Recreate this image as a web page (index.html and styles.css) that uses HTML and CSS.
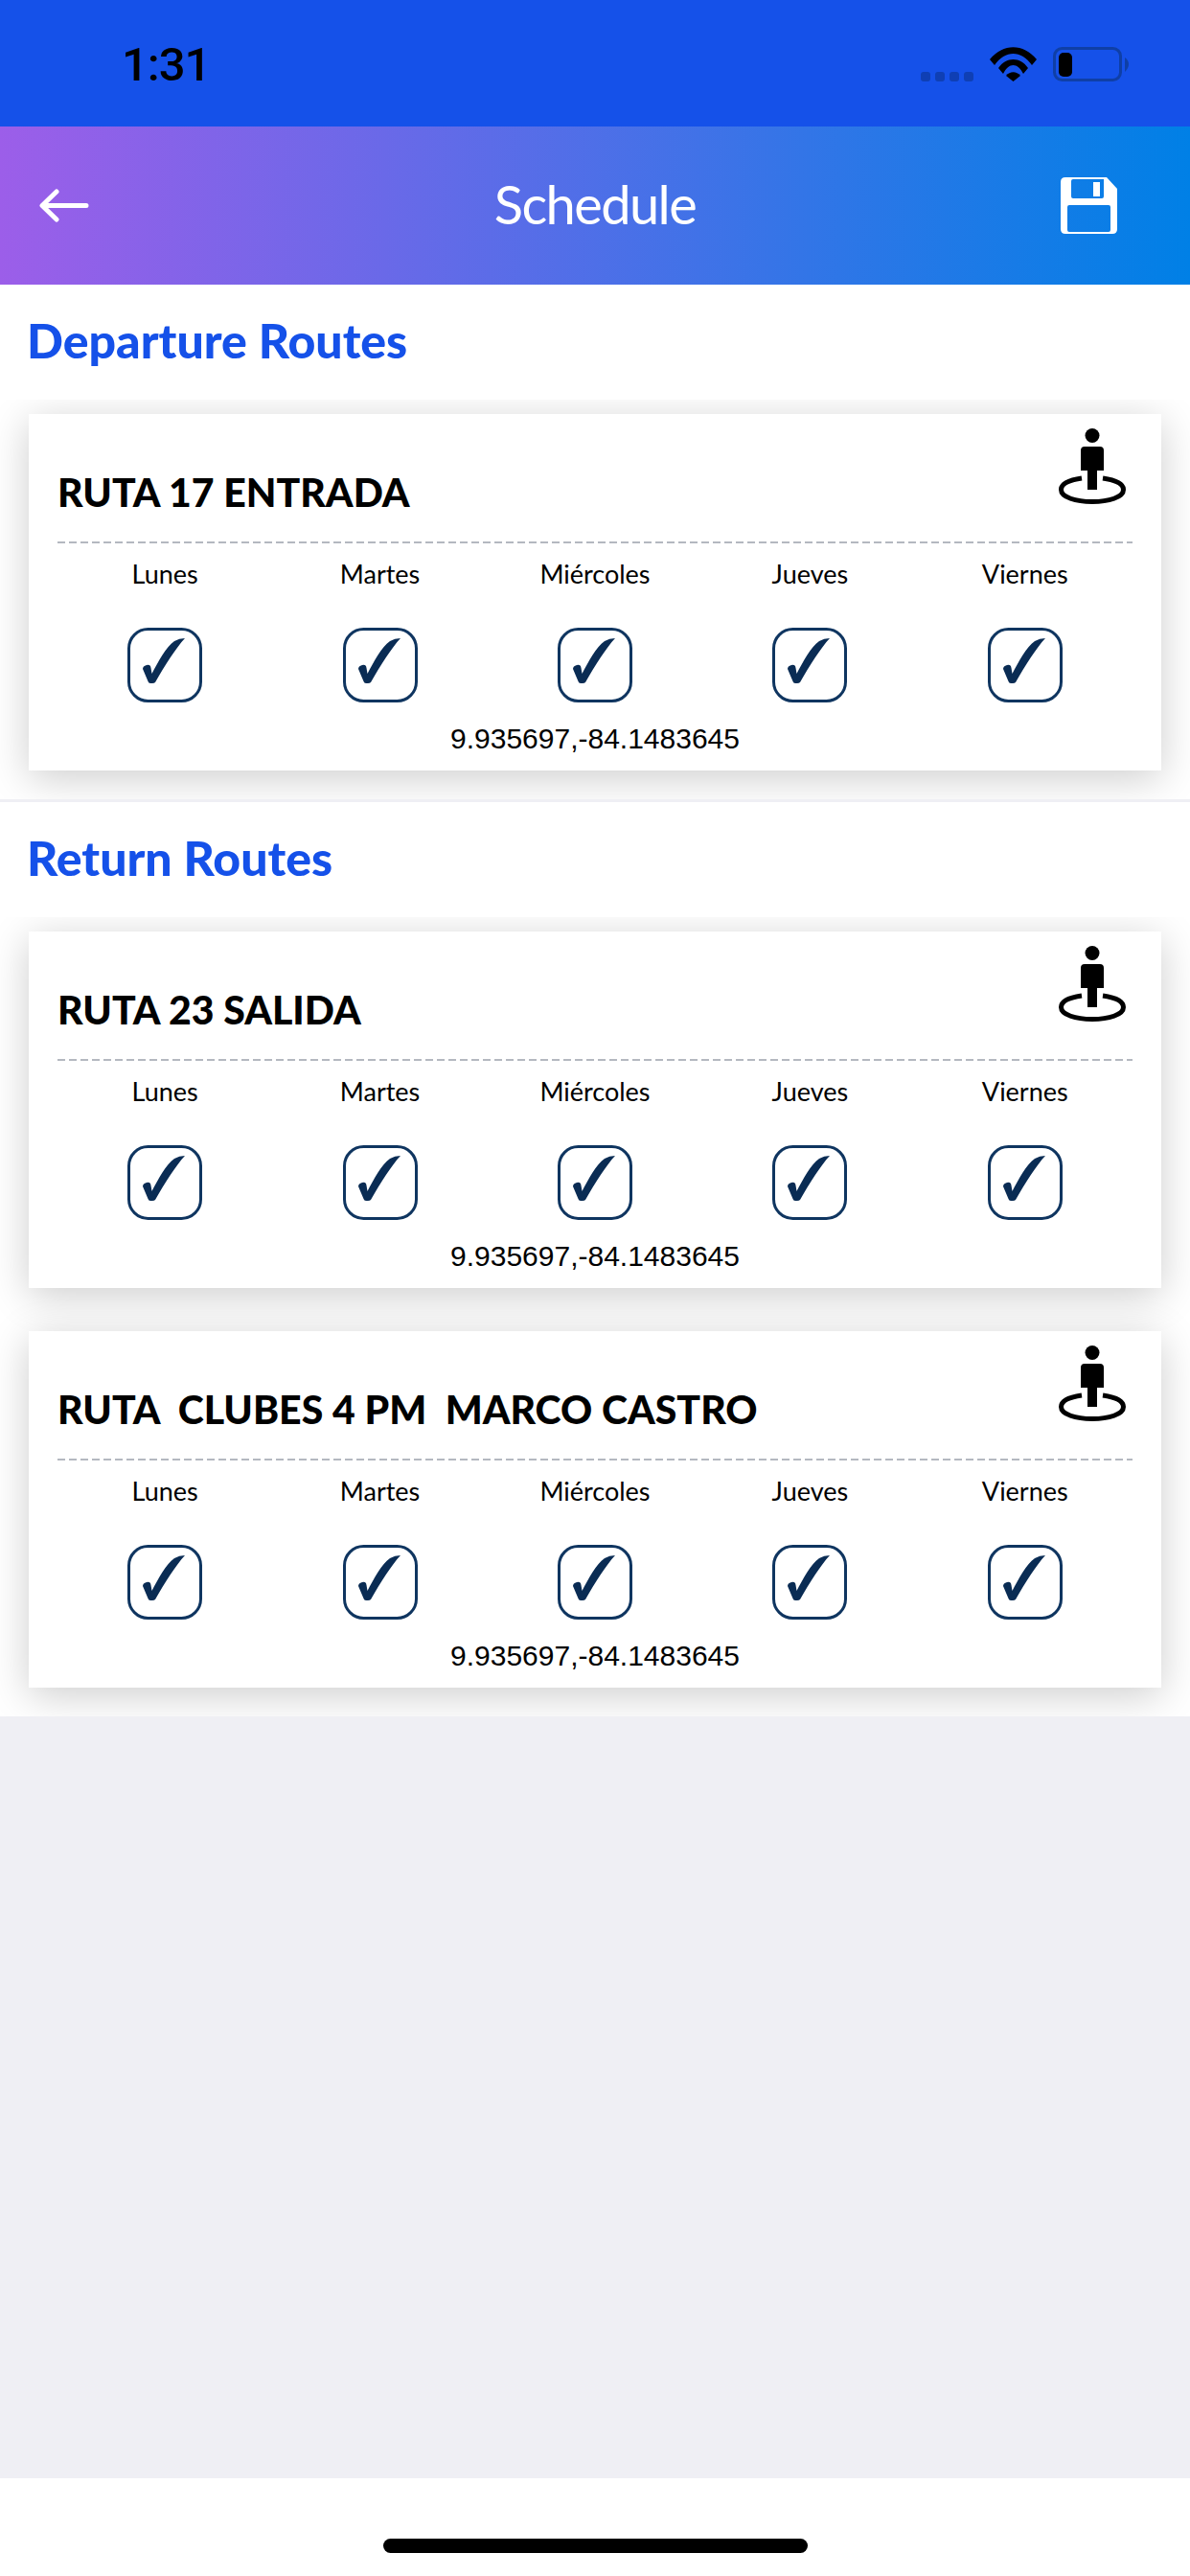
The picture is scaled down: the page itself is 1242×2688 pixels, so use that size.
FILE: index.html
```html
<!DOCTYPE HTML>
<html>
	<head>
		<title>Schedule</title>
		<meta name="viewport" content="width=device-width, initial-scale=1.0">
		<link rel="stylesheet" href="styles.css">
	</head>
	<body>
	<svg class="sprites" width="0" height="0">
		<symbol id="person" viewBox="0 0 70 80">
			<circle cx="35" cy="7.5" r="7.5"/>
			<path d="M27 19h16q4 0 4 4v21h-7v20h-10v-20h-7v-21q0-4 4-4z"/>
			<path d="M24 52C10 54 2.500 58 2.500 64C2.500 72 18 76.500 35 76.500C52 76.500 67.500 72 67.500 64C67.500 58 60 54 46 52" fill="none" stroke="#000" stroke-width="5"/>
		</symbol>
		<symbol id="check" viewBox="0 0 78 78">
			<rect x="1.500" y="1.500" width="75" height="75" rx="20" fill="#fff" stroke="#0f3560" stroke-width="3"/>
			<path d="M16 43Q16 40 20 39Q24 38 24.500 42L25.500 48C32 36 40 20 49 14Q54 11 60 11C50 22 40 38 29 57Q28 58 26 58L24 58Q22 58 21.500 56Z" fill="#0a2c54"/>
		</symbol>
	</svg>

	<div class="status-bar">
		<span class="time">1:31</span>
		<div class="status-icons">
			<svg class="signal" width="55" height="10" viewBox="0 0 55 10" fill="#0f3fb4">
				<rect width="10" height="10" rx="3"/>
				<rect x="15" width="10" height="10" rx="3"/>
				<rect x="30" width="10" height="10" rx="3"/>
				<rect x="45" width="10" height="10" rx="3"/>
			</svg>
			<svg width="49" height="36" viewBox="0 0 49 36">
				<path d="M0 13C14 -4 35 -4 49 13L44 19C33 3 16 3 5 19Z"/>
				<path d="M9 22C17 10 32 10 40 22L35 28C29 16 20 16 14 28Z"/>
				<path d="M17 30C21 25 28 25 32 30L24.500 36Z"/>
			</svg>
			<svg width="79" height="36" viewBox="0 0 79 36">
				<rect x="1.500" y="1.500" width="69" height="33" rx="8" fill="none" stroke="#0f3fa6" stroke-width="3"/>
				<rect x="6" y="6" width="14" height="25" rx="5"/>
				<path d="M75 11Q79 14 79 18Q79 22 75 26Z" fill="#0f3fa6"/>
			</svg>
		</div>
	</div>

	<header class="top-bar">
		<svg class="back" width="52" height="35" viewBox="0 0 52 35" fill="none" stroke="#fff" stroke-width="5" stroke-linecap="round" stroke-linejoin="round">
			<path d="M49 17.500H5M18 3L3 17.500L18 32"/>
		</svg>
		<h1>Schedule</h1>
		<svg class="save" width="59" height="59" viewBox="0 0 59 59" fill="#fff">
			<path fill-rule="evenodd" d="M5 0H48L59 12V54Q59 59 54 59H5Q0 59 0 54V5Q0 0 5 0ZM13 2Q11 2 11 4V20Q11 22 13 22H43Q45 22 45 20V2ZM9 29Q7 29 7 31V55Q7 57 9 57H50Q52 57 52 55V31Q52 29 50 29Z"/>
			<rect x="34" y="5" width="7" height="15"/>
		</svg>
	</header>

	<main>
		<h2>Departure Routes</h2>
		<section class="route-list">
			<div class="route">
				<div class="route-head">
					<h3>RUTA 17 ENTRADA</h3>
					<svg class="person"><use href="#person"/></svg>
				</div>
				<div class="days">
					<div class="day">Lunes<svg class="check"><use href="#check"/></svg></div>
					<div class="day">Martes<svg class="check"><use href="#check"/></svg></div>
					<div class="day">Miércoles<svg class="check"><use href="#check"/></svg></div>
					<div class="day">Jueves<svg class="check"><use href="#check"/></svg></div>
					<div class="day">Viernes<svg class="check"><use href="#check"/></svg></div>
				</div>
				<p class="coords">9.935697,-84.1483645</p>
			</div>
		</section>
		<div class="divider"></div>
		<h2>Return Routes</h2>
		<section class="route-list">
			<div class="route">
				<div class="route-head">
					<h3>RUTA 23 SALIDA</h3>
					<svg class="person"><use href="#person"/></svg>
				</div>
				<div class="days">
					<div class="day">Lunes<svg class="check"><use href="#check"/></svg></div>
					<div class="day">Martes<svg class="check"><use href="#check"/></svg></div>
					<div class="day">Miércoles<svg class="check"><use href="#check"/></svg></div>
					<div class="day">Jueves<svg class="check"><use href="#check"/></svg></div>
					<div class="day">Viernes<svg class="check"><use href="#check"/></svg></div>
				</div>
				<p class="coords">9.935697,-84.1483645</p>
			</div>
			<div class="route">
				<div class="route-head">
					<h3>RUTA  CLUBES 4 PM  MARCO CASTRO</h3>
					<svg class="person"><use href="#person"/></svg>
				</div>
				<div class="days">
					<div class="day">Lunes<svg class="check"><use href="#check"/></svg></div>
					<div class="day">Martes<svg class="check"><use href="#check"/></svg></div>
					<div class="day">Miércoles<svg class="check"><use href="#check"/></svg></div>
					<div class="day">Jueves<svg class="check"><use href="#check"/></svg></div>
					<div class="day">Viernes<svg class="check"><use href="#check"/></svg></div>
				</div>
				<p class="coords">9.935697,-84.1483645</p>
			</div>
		</section>
	</main>

	<footer>
		<div class="home-bar"></div>
	</footer>
	</body>
</html>
```

FILE: styles.css
```css
html{
	height: 100%;
}

body{
	margin: 0;
	height: 2688px;
	display: flex;
	flex-direction: column;
	background: #efeff4;
	font-family: "Lato", "Open Sans", sans-serif;
	color: #000;
	overflow: hidden;
}

.sprites{
	position: absolute;
}

.status-bar{
	height: 132px;
	box-sizing: border-box;
	padding: 49px 64px 0 127px;
	display: flex;
	justify-content: space-between;
	align-items: flex-start;
	background: #1551e9;
}

.time{
	font-family: "Roboto", "Liberation Sans", sans-serif;
	font-weight: 500;
	font-size: 49px;
	line-height: 38px;
	letter-spacing: -1px;
}

.status-icons{
	display: flex;
	align-items: flex-end;
	gap: 17px;
}

.top-bar{
	height: 165px;
	display: grid;
	grid-template-columns: 1fr auto 1fr;
	align-items: center;
	background: linear-gradient(to right, #9c5ee9, #0080e6);
}

.top-bar h1{
	margin: 0 0 4px 0;
	font-size: 56px;
	font-weight: 400;
	letter-spacing: -1.6px;
	color: #fff;
}

.back{
	margin-left: 41px;
}

.save{
	justify-self: end;
	margin-right: 76px;
}

h2{
	margin: 0;
	height: 120px;
	box-sizing: border-box;
	padding: 26px 0 0 28px;
	font-size: 50px;
	line-height: 64px;
	font-weight: 900;
	color: #1551e9;
	background: #fff;
}

.route-list{
	overflow: hidden;
	padding-top: 15px;
	background: #fff;
}

.route{
	margin: 0 30px 30px 30px;
	height: 372px;
	box-sizing: border-box;
	padding: 0 30px;
	background: #fff;
	box-shadow: 0 8px 40px rgba(0, 0, 0, 0.2);
}

.route + .route{
	margin-top: 45px;
}

.route-head{
	height: 135px;
	box-sizing: border-box;
	padding: 0 7px 38px 0;
	display: flex;
	justify-content: space-between;
	align-items: flex-end;
	background: repeating-linear-gradient(to right, #b4b8c0 0, #b4b8c0 8px, transparent 8px, transparent 12px) left bottom / 100% 2px no-repeat;
}

.route-head h3{
	margin: 0;
	font-size: 41px;
	line-height: 30px;
	font-weight: 900;
	white-space: pre;
}

.person{
	width: 70px;
	height: 80px;
	margin-bottom: 2px;
}

.days{
	display: grid;
	grid-template-columns: repeat(5, 1fr);
}

.day{
	padding-top: 14px;
	display: flex;
	flex-direction: column;
	align-items: center;
	gap: 38px;
	font-size: 27px;
	line-height: 36px;
}

.check{
	width: 78px;
	height: 78px;
}

.coords{
	margin: 20px 0 0 0;
	font-family: "Liberation Sans", Arial, sans-serif;
	font-size: 30px;
	line-height: 36px;
	text-align: center;
}

.divider{
	height: 3px;
	background: #efeff4;
}

footer{
	margin-top: auto;
	height: 102px;
	box-sizing: border-box;
	padding-top: 63px;
	background: #fff;
}

.home-bar{
	width: 443px;
	height: 15px;
	margin: 0 auto;
	border-radius: 8px;
	background: #000;
}
```
